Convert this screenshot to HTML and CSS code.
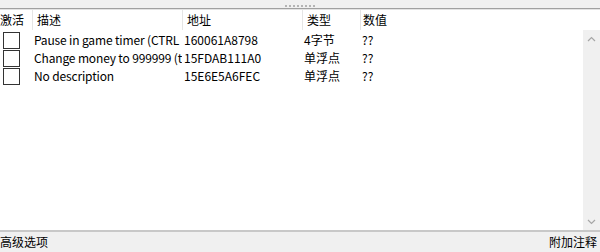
FILE: index.html
```html
<!DOCTYPE html>
<html lang="zh-CN">
<head>
    <meta charset="UTF-8">
    <title>地址列表</title>
    <link rel="stylesheet" href="styles.css">
</head>
<body>
    <div class="splitter">
        <div class="grip"></div>
    </div>

    <div class="list">
        <div class="main">
            <div class="header">
                <div class="col c-active">激活</div>
                <div class="col c-desc">描述</div>
                <div class="col c-addr">地址</div>
                <div class="col c-type">类型</div>
                <div class="col c-value">数值</div>
            </div>
            <div class="body">
                <div class="rows">
                    <div class="row">
                        <div class="cell c-active"><span class="check"></span></div>
                        <div class="cell c-desc">Pause in game timer (CTRL</div>
                        <div class="cell c-addr">160061A8798</div>
                        <div class="cell c-type">4字节</div>
                        <div class="cell c-value">??</div>
                    </div>
                    <div class="row">
                        <div class="cell c-active"><span class="check"></span></div>
                        <div class="cell c-desc">Change money to 999999 (t</div>
                        <div class="cell c-addr">15FDAB111A0</div>
                        <div class="cell c-type">单浮点</div>
                        <div class="cell c-value">??</div>
                    </div>
                    <div class="row">
                        <div class="cell c-active"><span class="check"></span></div>
                        <div class="cell c-desc">No description</div>
                        <div class="cell c-addr">15E6E5A6FEC</div>
                        <div class="cell c-type">单浮点</div>
                        <div class="cell c-value">??</div>
                    </div>
                </div>
                <div class="scrollbar">
                    <svg width="9" height="6" viewBox="0 0 9 6"><path d="M1 5 L4.5 1.5 L8 5" fill="none" stroke="#a6a6a6" stroke-width="1.2"/></svg>
                    <svg width="9" height="6" viewBox="0 0 9 6"><path d="M1 1 L4.5 4.5 L8 1" fill="none" stroke="#a6a6a6" stroke-width="1.2"/></svg>
                </div>
            </div>
        </div>
    </div>

    <div class="footer">
        <span>高级选项</span>
        <span>附加注释</span>
    </div>
</body>
</html>
```

FILE: styles.css
```css
body {
    margin: 0;
    width: 600px;
    height: 252px;
    overflow: hidden;
    font-family: "Noto Sans CJK SC", "Liberation Sans", sans-serif;
    font-size: 12px;
    color: #000;
    background: #fff;
    display: flex;
    flex-direction: column;
}
.splitter {
    height: 8px;
    background: #f0f0f0;
    border-bottom: 1px solid #a0a0a0;
    box-shadow: 0 1px 0 #e3e3e3;
    display: flex;
    justify-content: center;
}
.grip {
    width: 30px;
    height: 3px;
    margin-top: 2px;
    border-bottom: 2px dotted #b4b4b4;
}
.list {
    flex: 1;
    display: flex;
    min-height: 0;
    padding-top: 1px;
}
.main {
    flex: 1;
    display: flex;
    flex-direction: column;
    min-width: 0;
}
.header,
.row {
    display: grid;
    grid-template-columns: 32px 150px 120px 58px 1fr;
}
.header {
    height: 20px;
    line-height: 20px;
}
.header .col {
    padding-left: 4px;
    border-left: 1px solid #e5e5e5;
    white-space: nowrap;
    overflow: hidden;
}
.header .c-active {
    border-left: none;
    padding-left: 0;
}
.header .c-value {
    padding-left: 2px;
}
.body {
    flex: 1;
    display: flex;
    min-height: 0;
}
.rows {
    flex: 1;
    padding-top: 1px;
}
.row {
    height: 18px;
    line-height: 18px;
}
.cell {
    padding-left: 2px;
    white-space: nowrap;
    overflow: hidden;
}
.row .c-desc {
    letter-spacing: -0.15px;
}
.row .c-active {
    padding-left: 3px;
    display: flex;
    align-items: center;
}
.check {
    width: 15px;
    height: 15px;
    border: 1px solid #333;
    background: #fff;
}
.scrollbar {
    width: 17px;
    background: #f0f0f0;
    display: flex;
    flex-direction: column;
    justify-content: space-between;
    align-items: center;
    padding: 6px 0 5px;
}
.footer {
    height: 20px;
    line-height: 20px;
    background: #f0f0f0;
    border-top: 2px solid #c8c8c8;
    display: flex;
    justify-content: space-between;
    padding-right: 3px;
}
```
